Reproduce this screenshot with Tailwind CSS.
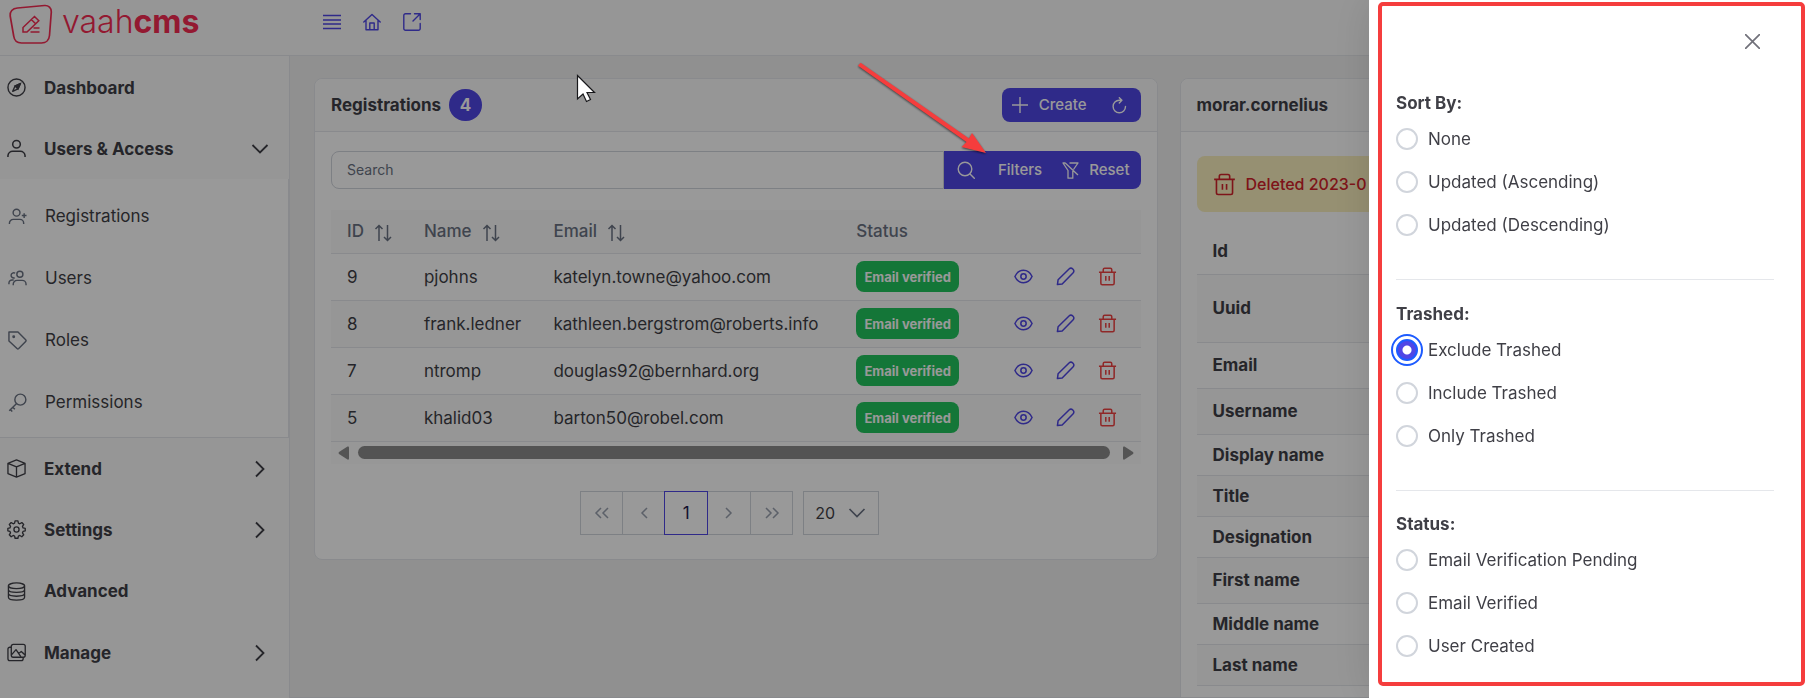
<!DOCTYPE html>
<html lang="en">
<head>
<meta charset="utf-8">
<title>VaahCMS - Registrations</title>
<script src="https://cdn.jsdelivr.net/npm/@tailwindcss/browser@4"></script>
</head>
<body class="h-screen overflow-hidden bg-[#f1f1f1] font-['Inter',sans-serif] text-[17px] leading-6 text-[#3f3f46]">

<svg class="hidden" xmlns="http://www.w3.org/2000/svg">
  <defs>
    <symbol id="eye" viewBox="0 0 20 20"><path d="M1 10c2-4.400 5.200-6.500 9-6.500S17 5.600 19 10c-2 4.400-5.200 6.500-9 6.500S3 14.400 1 10z"/><circle cx="10" cy="10" r="2.800"/></symbol>
    <symbol id="pencil" viewBox="0 0 20 20"><path d="M1.500 18.500l.700-5L14 1.900a2.400 2.400 0 0 1 3.400 0l.700.700a2.400 2.400 0 0 1 0 3.400L6.500 17.800z"/></symbol>
    <symbol id="trash" viewBox="0 0 20 20"><path d="M1 5.500h18M3 5.500v11.700a1.500 1.500 0 0 0 1.500 1.500h11a1.500 1.500 0 0 0 1.500-1.500V5.500M5.500 5.500V2.800A1.500 1.500 0 0 1 7 1.300h6a1.500 1.500 0 0 1 1.500 1.500v2.700M8.200 9.500v5M11.800 9.500v5"/></symbol>
    <symbol id="sort" viewBox="0 0 18 18"><path d="M5 17V1.500M1.500 5L5 1.500 8.500 5M13.500 1v15.500M10 13l3.500 3.500L17 13"/></symbol>
    <symbol id="right" viewBox="0 0 18 18"><path d="M5 1.500L12.500 9 5 16.500"/></symbol>
    <symbol id="down" viewBox="0 0 18 18"><path d="M1.500 5L9 12.500 16.500 5"/></symbol>
  </defs>
</svg>

<div class="flex h-full flex-col">
  <header class="flex h-14 shrink-0 border-b border-gray-200 bg-[#fafafa]">
    <a href="#" class="flex w-[289px] shrink-0 items-start gap-[9px] pt-1 pl-2 text-[#f52b52]" aria-label="vaahcms">
      <svg class="h-10 w-[45px]" viewBox="0 0 45 40" fill="none" stroke="currentColor" stroke-width="1.700"><path d="M9.500 4L36.500 1.500c4-.300 7 2.500 6.800 6.500L41.500 31.500c-.400 4.500-3.500 7.500-8 7.500H13.500c-4.500 0-7.200-2.500-7.800-7L2.200 12C1.600 7.500 4.500 4.400 9.500 4z"/><g stroke-width="1.500"><path d="M15 28v-4.500L26.500 12.500l4.300 4.300L19 28zM23.300 15.500l4.300 4.300M25.500 24h6M22.500 28h9"/></g></svg>
      <span class="text-[32px] leading-[36px] font-light">vaah<b class="font-bold">cms</b></span>
    </a>
    <nav class="flex items-start gap-[22px] pt-[13px] pl-[34px] text-[#4f46e5]" aria-label="Quick links">
      <button aria-label="Toggle menu"><svg class="size-[18px]" viewBox="0 0 18 18" fill="none" stroke="currentColor" stroke-width="1.500"><path d="M0 2.500h18M0 7h18M0 11h18M0 15.500h18"/></svg></button>
      <button aria-label="Home"><svg class="size-[18px]" viewBox="0 0 18 18" fill="none" stroke="currentColor" stroke-width="1.400" stroke-linejoin="round" stroke-linecap="round"><path d="M.800 9L9 1.500 17.200 9M3 7.500v9.300h12V7.500M6.800 16.500V10h4.400v6.500"/></svg></button>
      <button aria-label="Open site"><svg class="size-[18px]" viewBox="0 0 18 18" fill="none" stroke="currentColor" stroke-width="1.400" stroke-linejoin="round" stroke-linecap="round"><path d="M7.500.800H2.500A1.700 1.700 0 0 0 .800 2.500v13a1.700 1.700 0 0 0 1.700 1.700h13a1.700 1.700 0 0 0 1.700-1.700v-5M11.500.800h5.700v5.700M17 1L10 8"/></svg></button>
    </nav>
  </header>

  <div class="flex min-h-0 flex-1">
    <aside class="w-[290px] shrink-0 border-r border-gray-200 bg-[#fafafa] pt-px">
      <nav class="font-bold" aria-label="Main">
        <a href="#" class="flex h-[61px] items-center gap-[18px] pl-[7px]">
          <svg class="size-[19px]" viewBox="0 0 20 20" fill="none" stroke="currentColor" stroke-width="1.500"><circle cx="10" cy="10" r="9"/><path d="M14 6l-2.500 5.500L6 14l2.500-5.500z" stroke-linejoin="round"/><path d="M14 6l-5.500 2.500 3 3z" fill="currentColor"/></svg>Dashboard</a>
        <a href="#" class="flex h-[61px] items-center gap-[18px] pr-5 pl-[7px]">
          <svg class="size-[19px]" viewBox="0 0 20 20" fill="none" stroke="currentColor" stroke-width="1.600"><circle cx="10" cy="5.500" r="4"/><path d="M1 19v-1.500A5 5 0 0 1 6 13h8a5 5 0 0 1 5 4.500V19"/></svg><span class="flex-1">Users &amp; Access</span>
          <svg class="size-[18px]" fill="none" stroke="currentColor" stroke-width="1.800"><use href="#down"/></svg></a>
        <div class="border-r border-b border-gray-200 bg-white pt-[6px] pb-1 font-normal">
          <a href="#" class="flex h-[62px] items-center gap-[18px] pl-2"><svg class="size-[19px] text-gray-500" viewBox="0 0 20 20" fill="none" stroke="currentColor" stroke-width="1.500"><circle cx="9" cy="6" r="3.600"/><path d="M1.500 18v-1a4 4 0 0 1 4-4h7a4 4 0 0 1 4 4v1M17 6.500v5M14.500 9h5"/></svg>Registrations</a>
          <a href="#" class="flex h-[62px] items-center gap-[18px] pl-2"><svg class="size-[19px] text-gray-500" viewBox="0 0 20 20" fill="none" stroke="currentColor" stroke-width="1.500"><circle cx="12.500" cy="5.500" r="3.200"/><path d="M5.500 17v-1a4 4 0 0 1 4-4h5.500a4 4 0 0 1 4 4v1M7.500 4.500A2.700 2.700 0 1 0 7 9.200M1 16v-1.200A3.300 3.300 0 0 1 4.500 11.500H6"/></svg>Users</a>
          <a href="#" class="flex h-[62px] items-center gap-[18px] pl-2"><svg class="size-[19px] text-gray-500" viewBox="0 0 20 20" fill="none" stroke="currentColor" stroke-width="1.500" stroke-linejoin="round"><path d="M1 1h9.500L18.600 9.200a1.300 1.300 0 0 1 0 1.800l-7.300 7.500a1.300 1.300 0 0 1-1.800 0L1 10.500z"/><circle cx="6" cy="6" r=".8" fill="currentColor"/></svg>Roles</a>
          <a href="#" class="flex h-[62px] items-center gap-[18px] pl-2"><svg class="size-[19px] text-gray-500" viewBox="0 0 20 20" fill="none" stroke="currentColor" stroke-width="1.500"><circle cx="13" cy="7" r="5.800"/><path d="M8.800 11.200L1.300 18.700M5 15l2.200 2.200M2.500 17.500l2 2"/></svg>Permissions</a>
        </div>
        <a href="#" class="flex h-[61px] items-center gap-[18px] pr-5 pl-[7px]">
          <svg class="size-[19px]" viewBox="0 0 20 20" fill="none" stroke="currentColor" stroke-width="1.400" stroke-linejoin="round"><path d="M10 1l9 3.500v10.800L10 19l-9-3.700V4.500zM1 4.500L10 8.300l9-3.800M10 8.300V19"/></svg><span class="flex-1">Extend</span>
          <svg class="size-[18px]" fill="none" stroke="currentColor" stroke-width="1.800"><use href="#right"/></svg></a>
        <a href="#" class="flex h-[61px] items-center gap-[18px] pr-5 pl-[7px]">
          <svg class="size-[19px]" viewBox="0 0 20 20" fill="none" stroke="currentColor" stroke-width="1.400" stroke-linejoin="round"><circle cx="10" cy="10" r="2.700"/><path d="M8.500 1h3l.500 2.400 1.500.600 2.100-1.300 2 2L16.300 6.800l.600 1.500 2.300.500v2.600l-2.300.600-.600 1.500 1.300 2.100-2 2-2.100-1.300-1.500.600-.500 2.300h-3l-.500-2.300-1.500-.600-2.100 1.300-2-2 1.300-2.100-.600-1.500L.900 11.400V8.800l2.200-.500.600-1.500L2.400 4.700l2-2L6.500 4 8 3.400z"/></svg><span class="flex-1">Settings</span>
          <svg class="size-[18px]" fill="none" stroke="currentColor" stroke-width="1.800"><use href="#right"/></svg></a>
        <a href="#" class="flex h-[62px] items-center gap-[18px] pl-[7px]">
          <svg class="size-[19px]" viewBox="0 0 20 20" fill="none" stroke="currentColor" stroke-width="1.400"><ellipse cx="10" cy="4" rx="8.500" ry="3"/><path d="M1.500 4v12c0 1.700 3.800 3 8.500 3s8.500-1.300 8.500-3V4M1.500 8.200c0 1.600 3.800 2.800 8.500 2.800s8.500-1.200 8.500-2.800M1.500 12.200c0 1.600 3.800 2.800 8.500 2.800s8.500-1.200 8.500-2.800"/></svg>Advanced</a>
        <a href="#" class="flex h-[61px] items-center gap-[18px] pr-5 pl-[7px]">
          <svg class="size-[19px]" viewBox="0 0 20 20" fill="none" stroke="currentColor" stroke-width="1.400" stroke-linejoin="round"><rect x="4.500" y="1.500" width="14.700" height="13.500" rx="2"/><path d="M4.500 4.500H3a2 2 0 0 0-2 2V16.500a2 2 0 0 0 2 2h12a2 2 0 0 0 2-2V15M4.700 12.500L9.500 7l5.200 7.500M12.300 11l2.700-2 4 3.500"/></svg><span class="flex-1">Manage</span>
          <svg class="size-[18px]" fill="none" stroke="currentColor" stroke-width="1.800"><use href="#right"/></svg></a>
      </nav>
    </aside>

    <main class="grid min-w-0 flex-1 grid-cols-[7fr_5fr] items-start gap-[22px] overflow-hidden border-b border-gray-200 px-6 pt-[22px]">
      <section class="min-w-0 rounded-lg border border-gray-200 bg-white">
        <div class="flex h-[53px] items-center justify-between rounded-t-lg border-b border-gray-200 bg-[#fafafa] px-4">
          <h2 class="flex items-center gap-2 font-bold">Registrations <span class="flex h-8 w-[33px] items-center justify-center rounded-full bg-[#4f46e5] text-white">4</span></h2>
          <div class="flex h-[34px] overflow-hidden rounded-lg bg-[#4f46e5] text-[15px] font-medium text-white">
            <button class="flex items-center gap-[11px] pr-[11px] pl-[10px]"><svg class="size-4" viewBox="0 0 16 16" fill="none" stroke="currentColor" stroke-width="1.400"><path d="M8 0v16M0 8h16"/></svg>Create</button>
            <button class="px-[13px]" aria-label="Reload"><svg class="size-[17px]" viewBox="0 0 17 17" fill="none" stroke="currentColor" stroke-width="1.400" stroke-linecap="round" stroke-linejoin="round"><path d="M14.500 9.500a6.200 6.200 0 1 1-6.200-6.200h2.200M8.300.700l2.600 2.600-2.600 2.600"/></svg></button>
          </div>
        </div>
        <div class="px-4 pt-[19px] pb-6">
          <div class="flex h-[38px] text-[15px]">
            <input type="text" placeholder="Search" aria-label="Search" class="min-w-0 flex-1 rounded-l-lg border border-gray-300 bg-white px-[15px] text-[14px] placeholder:text-gray-500">
            <div class="flex overflow-hidden rounded-r-lg bg-[#4f46e5] font-medium text-white">
              <button class="pr-3 pl-[13px]" aria-label="Search now"><svg class="size-[18px]" viewBox="0 0 18 18" fill="none" stroke="currentColor" stroke-width="1.400" stroke-linecap="round"><circle cx="8" cy="8" r="6.800"/><path d="M13 13l4.300 4.300"/></svg></button>
              <button class="pr-[10px] pl-[11px]">Filters</button>
              <button class="flex items-center gap-[10px] pr-[11px] pl-[10px]"><svg class="size-[17px]" viewBox="0 0 17 17" fill="none" stroke="currentColor" stroke-width="1.300" stroke-linejoin="round"><path d="M7.500 1H16l-4.500 6.500M3 1H1l5 7.500v7.700h4.800V9M3 .800L16 13"/></svg>Reset</button>
            </div>
          </div>

          <div class="mt-[21px] bg-[#fcfcfc]">
            <table class="w-full table-fixed border-collapse text-left">
              <colgroup><col class="w-[9.500%]"><col class="w-[16%]"><col class="w-[37.400%]"><col class="w-[17%]"><col></colgroup>
              <thead>
                <tr class="h-[43px] border-b border-gray-200 bg-[#fafafa] text-gray-500">
                  <th class="pl-4 font-medium"><span class="flex items-center gap-[10px]">ID <svg class="mt-1 size-[18px]" fill="none" stroke="currentColor" stroke-width="1.500"><use href="#sort"/></svg></span></th>
                  <th class="pl-4 font-medium"><span class="flex items-center gap-[10px]">Name <svg class="mt-1 size-[18px]" fill="none" stroke="currentColor" stroke-width="1.500"><use href="#sort"/></svg></span></th>
                  <th class="pl-4 font-medium"><span class="flex items-center gap-[10px]">Email <svg class="mt-1 size-[18px]" fill="none" stroke="currentColor" stroke-width="1.500"><use href="#sort"/></svg></span></th>
                  <th class="pl-4 font-medium">Status</th>
                  <th aria-label="Actions"></th>
                </tr>
              </thead>
              <tbody id="rows"></tbody>
            </table>
            <div class="flex h-[22px] items-center gap-[9px] px-[7px] text-[#8d8d8d]">
              <svg class="h-[14px] w-[11px]" viewBox="0 0 11 14" fill="currentColor"><path d="M9.500.500Q11 0 11 1.500v11q0 1.500-1.500 1L1 8Q0 7 1 6z"/></svg>
              <div class="h-[13px] flex-1 rounded-full bg-[#8b8b8b]"></div>
              <svg class="ml-1 h-[14px] w-[11px]" viewBox="0 0 11 14" fill="currentColor"><path d="M1.500.500Q0 0 0 1.500v11Q0 14 1.500 13.500L10 8q1-1 0-2z"/></svg>
            </div>
          </div>

          <div class="mt-[27px] flex h-11 justify-center pr-3">
            <button class="flex w-[43px] items-center justify-center border border-gray-300 text-gray-400" aria-label="First page"><svg class="h-3 w-4" viewBox="0 0 16 12" fill="none" stroke="currentColor" stroke-width="1.500"><path d="M7 1L2 6l5 5M14 1L9 6l5 5"/></svg></button>
            <button class="flex w-[41px] items-center justify-center border-y border-gray-300 text-gray-400" aria-label="Previous page"><svg class="h-3 w-2" viewBox="0 0 8 12" fill="none" stroke="currentColor" stroke-width="1.500"><path d="M7 1L2 6l5 5"/></svg></button>
            <button class="w-11 border border-[#4f46e5] text-indigo-950" aria-current="page">1</button>
            <button class="flex w-[42px] items-center justify-center border-y border-gray-300 text-gray-400" aria-label="Next page"><svg class="h-3 w-2" viewBox="0 0 8 12" fill="none" stroke="currentColor" stroke-width="1.500"><path d="M1 1l5 5-5 5"/></svg></button>
            <button class="flex w-[43px] items-center justify-center border border-gray-300 text-gray-400" aria-label="Last page"><svg class="h-3 w-4" viewBox="0 0 16 12" fill="none" stroke="currentColor" stroke-width="1.500"><path d="M2 1l5 5-5 5M9 1l5 5-5 5"/></svg></button>
            <div class="relative ml-[10px] w-[76px]">
              <select aria-label="Rows per page" class="h-full w-full appearance-none border border-gray-300 bg-white pl-[11px] text-[16px]"><option>20</option></select>
              <svg class="pointer-events-none absolute top-[13px] right-[13px] size-[18px] text-gray-500" fill="none" stroke="currentColor" stroke-width="1.700"><use href="#down"/></svg>
            </div>
          </div>
        </div>
      </section>

      <section class="min-w-0 rounded-lg border border-gray-200 bg-white">
        <div class="flex h-[53px] items-center rounded-t-lg border-b border-gray-200 bg-[#fafafa] px-4"><h2 class="font-bold">morar.cornelius</h2></div>
        <div class="px-4 pt-6">
          <div class="flex h-14 items-center gap-[10px] rounded-lg bg-[#faf0be] px-4 text-[16px] font-medium text-[#d3222a]">
            <svg class="size-[23px]" fill="none" stroke="currentColor" stroke-width="1.400"><use href="#trash"/></svg>Deleted 2023-0
          </div>
          <table class="mt-4 w-full border-collapse text-left">
            <tbody class="[&>tr]:border-b [&>tr]:border-gray-200 [&>tr:nth-child(even)]:bg-[#fafafa] [&_th]:pl-4 [&_th]:font-bold">
              <tr class="h-[46px]"><th scope="row">Id</th></tr>
              <tr class="h-[68px]"><th scope="row">Uuid</th></tr>
              <tr class="h-[46px]"><th scope="row">Email</th></tr>
              <tr class="h-[46px]"><th scope="row">Username</th></tr>
              <tr class="h-[41px]"><th scope="row">Display name</th></tr>
              <tr class="h-[41px]"><th scope="row">Title</th></tr>
              <tr class="h-[41px]"><th scope="row">Designation</th></tr>
              <tr class="h-[46px]"><th scope="row">First name</th></tr>
              <tr class="h-[41px]"><th scope="row">Middle name</th></tr>
              <tr class="h-[41px]"><th scope="row">Last name</th></tr>
              <tr class="h-[41px]"><th scope="row"></th></tr>
            </tbody>
          </table>
        </div>
      </section>
    </main>
  </div>
</div>

<div class="fixed inset-0 bg-black/40"></div>

<aside class="fixed inset-y-0 right-0 w-[437px] bg-white pt-[2px] pr-px pl-[9px] shadow-[0_0_40px_rgba(0,0,0,0.12)]" aria-label="Filters">
  <div class="flex h-[684px] flex-col rounded-[5px] border-4 border-[#f53d3d] pr-[27px] pl-[14px]">
    <div class="flex justify-end pt-7 pr-[14px]">
      <button aria-label="Close"><svg class="size-[15px]" viewBox="0 0 15 15" fill="none" stroke="#71717a" stroke-width="1.700"><path d="M0 0l15 15M15 0L0 15"/></svg></button>
    </div>
    <fieldset class="mt-[42px] flex flex-col gap-[21px]">
      <legend class="mb-[13px] font-bold">Sort By:</legend>
      <label class="flex h-[22px] items-center gap-[10px]"><input type="radio" name="sort" class="size-[22px] appearance-none rounded-full border-2 border-gray-300">None</label>
      <label class="flex h-[22px] items-center gap-[10px]"><input type="radio" name="sort" class="size-[22px] appearance-none rounded-full border-2 border-gray-300">Updated (Ascending)</label>
      <label class="flex h-[22px] items-center gap-[10px]"><input type="radio" name="sort" class="size-[22px] appearance-none rounded-full border-2 border-gray-300">Updated (Descending)</label>
    </fieldset>
    <hr class="mt-[43px] border-gray-200">
    <fieldset class="mt-[22px] flex flex-col gap-[21px]">
      <legend class="mb-[13px] font-bold">Trashed:</legend>
      <label class="flex h-[22px] items-center gap-[10px]"><input type="radio" name="trashed" checked class="size-[22px] appearance-none rounded-full border-2 border-[#1d5bff] bg-[radial-gradient(circle,white_4px,#4f46e5_5px)] outline-2 outline-offset-[3px] outline-[#1d5bff]">Exclude Trashed</label>
      <label class="flex h-[22px] items-center gap-[10px]"><input type="radio" name="trashed" class="size-[22px] appearance-none rounded-full border-2 border-gray-300">Include Trashed</label>
      <label class="flex h-[22px] items-center gap-[10px]"><input type="radio" name="trashed" class="size-[22px] appearance-none rounded-full border-2 border-gray-300">Only Trashed</label>
    </fieldset>
    <hr class="mt-[43px] border-gray-200">
    <fieldset class="mt-[21px] flex flex-col gap-[21px]">
      <legend class="mb-[13px] font-bold">Status:</legend>
      <label class="flex h-[22px] items-center gap-[10px]"><input type="radio" name="status" class="size-[22px] appearance-none rounded-full border-2 border-gray-300">Email Verification Pending</label>
      <label class="flex h-[22px] items-center gap-[10px]"><input type="radio" name="status" class="size-[22px] appearance-none rounded-full border-2 border-gray-300">Email Verified</label>
      <label class="flex h-[22px] items-center gap-[10px]"><input type="radio" name="status" class="size-[22px] appearance-none rounded-full border-2 border-gray-300">User Created</label>
    </fieldset>
  </div>
</aside>

<!-- Arrow pointing at the Filters button -->
<svg class="pointer-events-none fixed top-[60px] left-[855px] h-[100px] w-[140px] drop-shadow-[0_1px_1px_rgba(0,0,0,0.6)]" viewBox="0 0 140 100" fill="#f53d3d"><path d="M5.600 2.800L114 78.500 117 73l14 20-24.500-6 5-5L3 5.800z"/></svg>
<!-- Mouse pointer -->
<svg class="pointer-events-none fixed top-[74px] left-[576px] h-[30px] w-5" viewBox="0 0 20 30" fill="white" stroke="#18181b" stroke-width="1.200"><path d="M1.500 1.500v23.500l5.500-5 3.500 7.500 4-2-3.500-7h7.500z"/></svg>

<template id="row">
  <tr class="h-[47px] border-b border-gray-200 bg-white even:bg-[#fafafa]">
    <td class="pl-4"></td><td class="pl-4"></td><td class="pl-4"></td>
    <td class="pl-4"><span class="flex h-[31px] w-[103px] items-center justify-center rounded-lg bg-[#22c55e] text-[13px] font-bold whitespace-nowrap text-white">Email verified</span></td>
    <td class="pr-6"><span class="flex justify-end gap-[23px] text-[#4f46e5]">
      <button aria-label="View"><svg class="size-[19px]" fill="none" stroke="currentColor" stroke-width="1.600"><use href="#eye"/></svg></button>
      <button aria-label="Edit"><svg class="size-[19px]" fill="none" stroke="currentColor" stroke-width="1.600" stroke-linejoin="round"><use href="#pencil"/></svg></button>
      <button aria-label="Delete" class="text-[#ef4444]"><svg class="size-[19px]" fill="none" stroke="currentColor" stroke-width="1.600"><use href="#trash"/></svg></button>
    </span></td>
  </tr>
</template>
<script>
  const users = [
    ['9', 'pjohns', 'katelyn.towne@yahoo.com'],
    ['8', 'frank.ledner', 'kathleen.bergstrom@roberts.info'],
    ['7', 'ntromp', 'douglas92@bernhard.org'],
    ['5', 'khalid03', 'barton50@robel.com'],
  ];
  const template = document.getElementById('row');
  for (const user of users) {
    const row = template.content.cloneNode(true);
    const cells = row.querySelectorAll('td');
    user.forEach((value, i) => { cells[i].textContent = value; });
    document.getElementById('rows').append(row);
  }
</script>
</body>
</html>
